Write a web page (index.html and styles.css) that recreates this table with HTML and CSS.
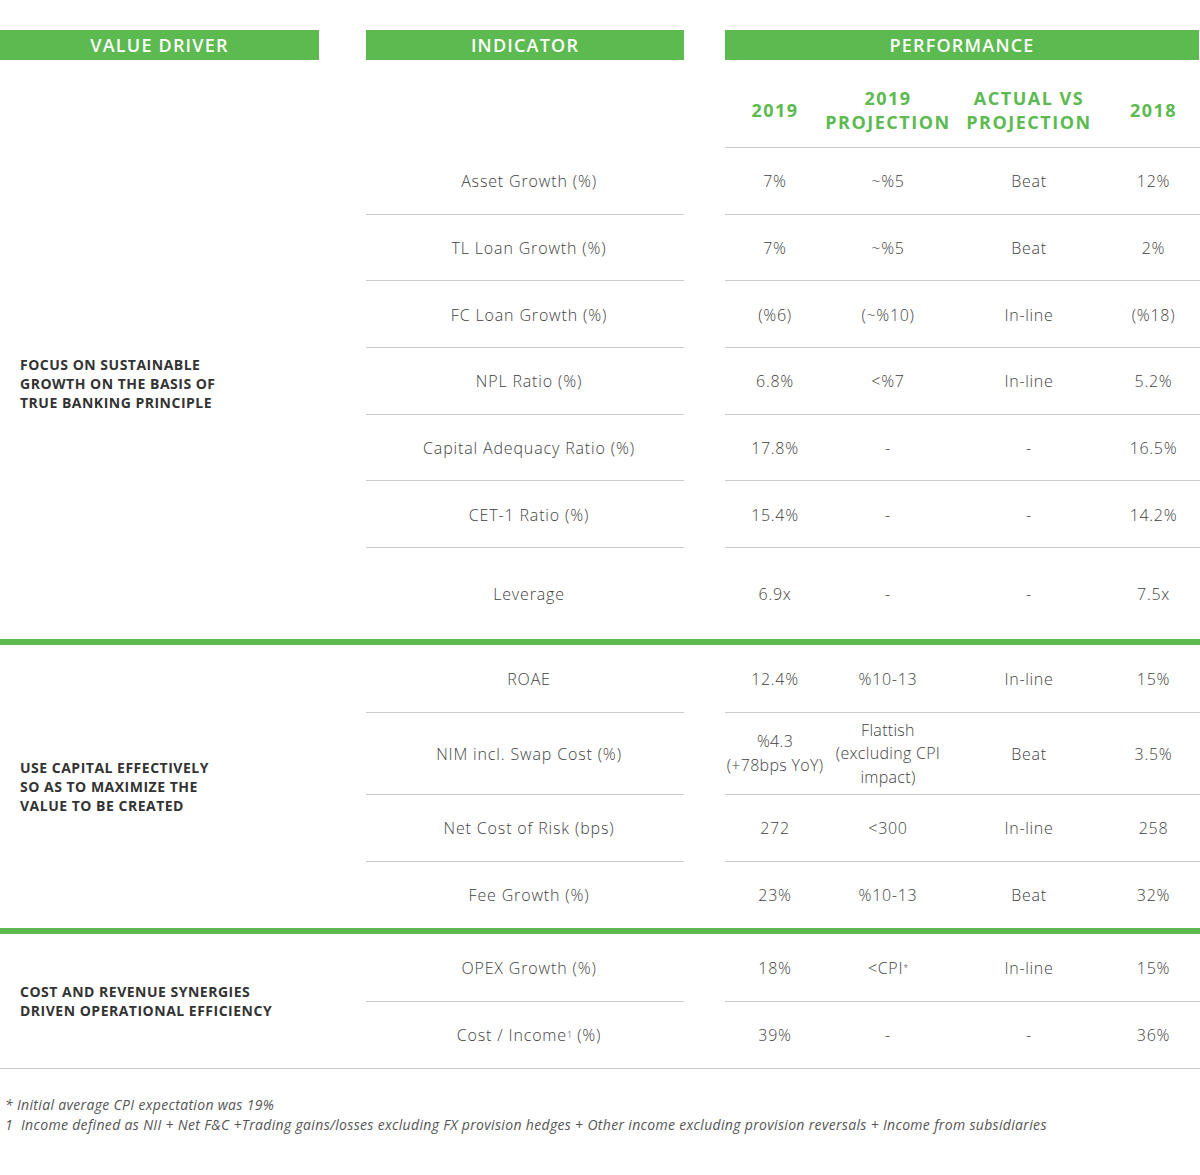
FILE: index.html
```html
<!DOCTYPE html>
<html>
<head>
<meta charset="utf-8">
<title>Value Drivers</title>
<link rel="stylesheet" href="styles.css">
</head>
<body>
<div class="page">
  <div class="bars">
    <div class="bar bar-driver">VALUE DRIVER</div>
    <div class="bar bar-ind">INDICATOR</div>
    <div class="bar bar-perf">PERFORMANCE</div>
  </div>

  <section class="sec sec1">
    <div class="driver"><p>FOCUS ON SUSTAINABLE<br>GROWTH ON THE BASIS OF<br>TRUE BANKING PRINCIPLE</p></div>
    <div class="rows">
      <div class="row colhead">
        <div class="ind"></div><div class="sp"></div>
        <div class="c">2019</div>
        <div class="c">2019<br>PROJECTION</div>
        <div class="c">ACTUAL VS<br>PROJECTION</div>
        <div class="c">2018</div>
      </div>
      <div class="row r1">
        <div class="ind">Asset Growth (%)</div><div class="sp"></div>
        <div class="c">7%</div><div class="c">~%5</div><div class="c">Beat</div><div class="c">12%</div>
      </div>
      <div class="row r1">
        <div class="ind">TL Loan Growth (%)</div><div class="sp"></div>
        <div class="c">7%</div><div class="c">~%5</div><div class="c">Beat</div><div class="c">2%</div>
      </div>
      <div class="row r1">
        <div class="ind">FC Loan Growth (%)</div><div class="sp"></div>
        <div class="c">(%6)</div><div class="c">(~%10)</div><div class="c">In-line</div><div class="c">(%18)</div>
      </div>
      <div class="row r1">
        <div class="ind">NPL Ratio (%)</div><div class="sp"></div>
        <div class="c">6.8%</div><div class="c">&lt;%7</div><div class="c">In-line</div><div class="c">5.2%</div>
      </div>
      <div class="row r1">
        <div class="ind">Capital Adequacy Ratio (%)</div><div class="sp"></div>
        <div class="c">17.8%</div><div class="c">-</div><div class="c">-</div><div class="c">16.5%</div>
      </div>
      <div class="row r1">
        <div class="ind">CET-1 Ratio (%)</div><div class="sp"></div>
        <div class="c">15.4%</div><div class="c">-</div><div class="c">-</div><div class="c">14.2%</div>
      </div>
      <div class="row last lev">
        <div class="ind">Leverage</div><div class="sp"></div>
        <div class="c">6.9x</div><div class="c">-</div><div class="c">-</div><div class="c">7.5x</div>
      </div>
    </div>
  </section>
  <div class="greenbar"></div>

  <section class="sec sec2">
    <div class="driver"><p>USE CAPITAL EFFECTIVELY<br>SO AS TO MAXIMIZE THE<br>VALUE TO BE CREATED</p></div>
    <div class="rows">
      <div class="row r2a">
        <div class="ind">ROAE</div><div class="sp"></div>
        <div class="c">12.4%</div><div class="c">%10-13</div><div class="c">In-line</div><div class="c">15%</div>
      </div>
      <div class="row tall">
        <div class="ind">NIM incl. Swap Cost (%)</div><div class="sp"></div>
        <div class="c multi">%4.3<br>(+78bps YoY)</div><div class="c multi">Flattish<br>(excluding CPI<br>impact)</div><div class="c">Beat</div><div class="c">3.5%</div>
      </div>
      <div class="row r2">
        <div class="ind">Net Cost of Risk (bps)</div><div class="sp"></div>
        <div class="c">272</div><div class="c">&lt;300</div><div class="c">In-line</div><div class="c">258</div>
      </div>
      <div class="row last r2b">
        <div class="ind">Fee Growth (%)</div><div class="sp"></div>
        <div class="c">23%</div><div class="c">%10-13</div><div class="c">Beat</div><div class="c">32%</div>
      </div>
    </div>
  </section>
  <div class="greenbar"></div>

  <section class="sec sec3">
    <div class="driver"><p>COST AND REVENUE SYNERGIES<br>DRIVEN OPERATIONAL EFFICIENCY</p></div>
    <div class="rows">
      <div class="row r3a">
        <div class="ind">OPEX Growth (%)</div><div class="sp"></div>
        <div class="c">18%</div><div class="c">&lt;CPI<sup>*</sup></div><div class="c">In-line</div><div class="c">15%</div>
      </div>
      <div class="row last r3b">
        <div class="ind">Cost / Income<sup>1</sup>&nbsp;(%)</div><div class="sp"></div>
        <div class="c">39%</div><div class="c">-</div><div class="c">-</div><div class="c">36%</div>
      </div>
    </div>
  </section>

  <div class="notes">
    <p>* Initial average CPI expectation was 19%</p>
    <p>1&nbsp; Income defined as NII + Net F&amp;C +Trading gains/losses excluding FX provision hedges + Other income excluding provision reversals + Income from subsidiaries</p>
  </div>
</div>
</body>
</html>
```

FILE: styles.css
```css
* { box-sizing: border-box; }
html, body { margin: 0; padding: 0; background: #fff; }
body {
  font-family: "Open Sans", "Liberation Sans", sans-serif;
  color: #3f3f3f;
  width: 1200px;
}
.page { padding-top: 30px; }

.bars { display: flex; height: 30px; }
.bar {
  background: #5cba50;
  color: #fff;
  font-size: 18px;
  font-weight: 600;
  display: flex;
  align-items: center;
  justify-content: center;
  letter-spacing: 1.2px;
}
.bar-driver { width: 319px; margin-right: 47px; }
.bar-ind { width: 318px; margin-right: 41px; }
.bar-perf { width: 474px; }

.sec { display: flex; }
.driver {
  width: 366px;
  flex: none;
  padding-left: 20px;
  display: flex;
  align-items: center;
}
.driver p {
  margin: 0;
  font-size: 14px;
  line-height: 19px;
  font-weight: 700;
  color: #333;
  letter-spacing: 0.5px;
}
.sec1 .driver { padding-top: 69px; }
.rows { flex: 1; display: flex; flex-direction: column; }

.row {
  display: grid;
  grid-template-columns: 318px 41px 100px 126px 156px 1fr;
}
.row > div {
  display: flex;
  align-items: center;
  justify-content: center;
  text-align: center;
  font-size: 16px;
  font-weight: 300;
  letter-spacing: 0.7px;
  padding-top: 1px;
  white-space: nowrap;
  border-bottom: 1px solid #cbcbcb;
}
.row > .ind { padding-left: 8px; letter-spacing: 0.85px; }
.row > .sp { border-bottom: none; }
.row.last > div { border-bottom: none; }

.colhead { height: 88px; }
.colhead > div {
  color: #5cba50;
  font-weight: 700;
  font-size: 18px;
  line-height: 24px;
  letter-spacing: 1.5px;
  padding-top: 13px;
}
.colhead > .ind { border-bottom: none; }

.r1 { height: 66.67px; }
.lev { height: 91px; }
.r2a { height: 68px; }
.tall { height: 82px; }
.r2 { height: 67px; }
.r2b { height: 66px; }
.r3a { height: 68px; }
.r3b { height: 66px; }

.row > .multi { line-height: 23.5px; letter-spacing: 0.3px; }

.greenbar { height: 6px; background: #5cba50; }

.sec3 { border-bottom: 1px solid #cbcbcb; }

sup { font-size: 9px; line-height: 0; vertical-align: 6px; letter-spacing: 0; }

.notes { padding: 26px 0 0 5px; }
.notes p {
  margin: 0;
  font-size: 14px;
  line-height: 20px;
  font-style: italic;
  font-weight: 400;
  letter-spacing: 0.33px;
  color: #555;
}
```
